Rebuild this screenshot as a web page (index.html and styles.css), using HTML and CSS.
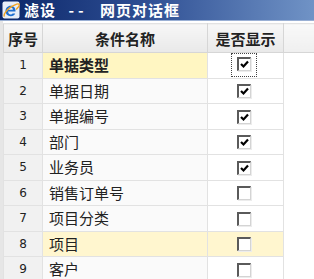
FILE: index.html
```html
<!DOCTYPE html>
<html lang="zh-CN">
<head>
  <meta charset="UTF-8">
  <title>滤设 -- 网页对话框</title>
  <link rel="stylesheet" href="styles.css">
</head>
<body>
  <div class="titlebar">
    <svg class="ie-icon" width="18" height="18" viewBox="0 0 18 18">
      <rect x="0.5" y="0.5" width="17" height="17" rx="2" fill="#e8eef8"/>
      <path d="M4 10.5h9.5c0.3-3.5-1.8-5.8-4.8-5.8c-3 0-5.2 2.3-5.2 5.3c0 3 2.2 5.2 5.2 5.2c2.2 0 3.8-1 4.5-2.8h-2.6c-0.4 0.7-1 1.1-1.9 1.1c-1.4 0-2.4-1-2.6-3zM6.6 8.7c0.2-1.2 1-2.1 2.2-2.1c1.2 0 2 0.9 2.1 2.1z" fill="#1e6fd0"/>
      <path d="M2.5 15.5c-1.5-1.8 2-6.5 7-9.8c4.5-2.8 7-3.3 7.6-2.3c0.6 1-0.8 3-3 5" fill="none" stroke="#f2a320" stroke-width="1.4"/>
    </svg>
    <span class="title">滤设 <span class="dash">--</span> 网页对话框</span>
  </div>

  <div class="frame">
    <table class="grid">
      <thead>
        <tr>
          <th class="col-no">序号</th>
          <th class="col-name">条件名称</th>
          <th class="col-show">是否显示</th>
          <th class="col-rest"></th>
        </tr>
      </thead>
      <tbody>
        <tr class="current">
          <td class="col-no">1</td>
          <td class="col-name">单据类型</td>
          <td class="col-show"><span class="focus"><span class="chk on"></span></span></td>
          <td class="col-rest"></td>
        </tr>
        <tr>
          <td class="col-no">2</td>
          <td class="col-name">单据日期</td>
          <td class="col-show"><span class="chk on"></span></td>
          <td class="col-rest"></td>
        </tr>
        <tr>
          <td class="col-no">3</td>
          <td class="col-name">单据编号</td>
          <td class="col-show"><span class="chk on"></span></td>
          <td class="col-rest"></td>
        </tr>
        <tr>
          <td class="col-no">4</td>
          <td class="col-name">部门</td>
          <td class="col-show"><span class="chk on"></span></td>
          <td class="col-rest"></td>
        </tr>
        <tr>
          <td class="col-no">5</td>
          <td class="col-name">业务员</td>
          <td class="col-show"><span class="chk on"></span></td>
          <td class="col-rest"></td>
        </tr>
        <tr>
          <td class="col-no">6</td>
          <td class="col-name">销售订单号</td>
          <td class="col-show"><span class="chk"></span></td>
          <td class="col-rest"></td>
        </tr>
        <tr>
          <td class="col-no">7</td>
          <td class="col-name">项目分类</td>
          <td class="col-show"><span class="chk"></span></td>
          <td class="col-rest"></td>
        </tr>
        <tr class="marked">
          <td class="col-no">8</td>
          <td class="col-name">项目</td>
          <td class="col-show"><span class="chk"></span></td>
          <td class="col-rest"></td>
        </tr>
        <tr>
          <td class="col-no">9</td>
          <td class="col-name">客户</td>
          <td class="col-show"><span class="chk"></span></td>
          <td class="col-rest"></td>
        </tr>
      </tbody>
    </table>
  </div>
</body>
</html>
```

FILE: styles.css
```css
body {
  margin: 0;
  padding: 0;
  background: #fff;
  font-family: "Noto Sans CJK SC", "DejaVu Sans", sans-serif;
  color: #111;
  overflow: hidden;
}

.titlebar {
  height: 20px;
  display: flex;
  align-items: center;
  gap: 4px;
  padding-left: 2px;
  background: linear-gradient(to right, #0b2668 0%, #2d4d92 45%, #7093c6 100%);
  border-bottom: 1px solid #9ab0d4;
}

.ie-icon {
  flex: none;
}

.title {
  color: #fff;
  font-weight: bold;
  font-size: 15px;
  line-height: 20px;
  white-space: pre;
  letter-spacing: 1px;
}

.title .dash {
  display: inline-block;
  margin: 0 8px;
  letter-spacing: 4px;
}

.frame {
  padding-top: 2px;
  border-left: 3px solid #e6e6e6;
}

.grid {
  border-collapse: collapse;
  table-layout: fixed;
  width: 311px;
}

.grid th {
  height: 28px;
  padding: 0;
  font-size: 15px;
  font-weight: bold;
  color: #222;
  background: linear-gradient(to bottom, #f7f7f7, #e9e9e9);
  border: 1px solid #d6d6d6;
  border-top-color: #e2e2e2;
  text-align: center;
}

.grid td {
  height: 24.5px;
  padding: 0;
  border: 1px solid #e2e2e2;
  font-size: 15px;
  line-height: 16px;
}

.col-no {
  width: 38px;
}

.col-name {
  width: 164px;
}

.col-show {
  width: 75px;
}

td.col-no {
  background: #f1f1f1;
  text-align: center;
  font-family: "DejaVu Sans", sans-serif;
  font-size: 12px;
  color: #222;
}

td.col-name {
  background: #fafafa;
  padding-left: 6px;
  color: #222;
}

td.col-show {
  background: #fff;
  text-align: center;
  padding-right: 4px;
}

td.col-rest {
  border: none;
  background: #fff;
}

.grid th.col-rest {
  border-right: none;
  background: linear-gradient(to bottom, #f9f9f9, #efefef);
}

.current td.col-name {
  background: #fff6c2;
  font-weight: bold;
}

.marked td.col-name,
.marked td.col-show {
  background: #fff6cf;
}

.chk {
  display: inline-block;
  vertical-align: middle;
  width: 14px;
  height: 14px;
  box-sizing: border-box;
  background: #fff;
  border-top: 2px solid #5a5a5a;
  border-left: 2px solid #5a5a5a;
  border-bottom: 1px solid #d4d4d4;
  border-right: 1px solid #d4d4d4;
  box-shadow: 1px 1px 0 #ececec;
  position: relative;
  top: -1px;
}

.chk.on::after {
  content: "";
  position: absolute;
  left: 1px;
  top: 1px;
  width: 9px;
  height: 9px;
  background: url("data:image/svg+xml;utf8,<svg xmlns='http://www.w3.org/2000/svg' width='9' height='9'><polyline points='1,4 3.5,6.5 8,1.5' fill='none' stroke='black' stroke-width='2.2'/></svg>") no-repeat;
}

.focus {
  display: inline-block;
  padding: 4px 5px;
  border: 1px dotted #444;
  line-height: 0;
}
```
